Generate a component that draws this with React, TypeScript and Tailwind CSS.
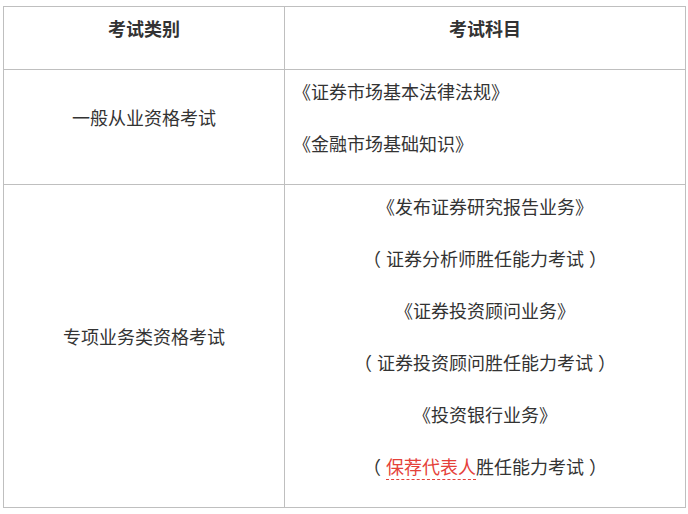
const font = { fontFamily: '"Liberation Sans", "Noto Sans CJK SC", sans-serif' };

const generalSubjects = ['《证券市场基本法律法规》', '《金融市场基础知识》'];

export default function App() {
  return (
    <div className="w-[688px] h-[514px] bg-white pl-[3px] pt-[6px]" style={font}>
      <table className="w-[683px] border-collapse text-[18px] text-[#333]">
        <colgroup>
          <col className="w-[281px]" />
          <col />
        </colgroup>
        <tbody>
          {/* Header */}
          <tr>
            <th className="border border-[#bfbfbf] pt-[10px] pb-0 align-middle font-bold">
              <p className="leading-[26px] mb-[26px]">考试类别</p>
            </th>
            <th className="border border-[#bfbfbf] pt-[10px] pb-0 align-middle font-bold">
              <p className="leading-[26px] mb-[26px]">考试科目</p>
            </th>
          </tr>

          {/* 一般从业 */}
          <tr>
            <td className="border border-[#bfbfbf] pt-[10px] pb-0 align-middle text-center">
              <p className="leading-[26px] mb-[26px]">一般从业资格考试</p>
            </td>
            <td className="border border-[#bfbfbf] pt-[10px] pb-0 pl-[8px] align-middle">
              {generalSubjects.map((s) => (
                <p key={s} className="leading-[26px] mb-[26px]">{s}</p>
              ))}
            </td>
          </tr>

          {/* 专项业务类 */}
          <tr>
            <td className="border border-[#bfbfbf] pt-[10px] pb-0 align-middle text-center">
              <p className="leading-[26px] mb-[26px]">专项业务类资格考试</p>
            </td>
            <td className="border border-[#bfbfbf] pt-[10px] pb-0 align-middle text-center">
              <p className="leading-[26px] mb-[26px]">《发布证券研究报告业务》</p>
              <p className="leading-[26px] mb-[26px]">（ 证券分析师胜任能力考试 ）</p>
              <p className="leading-[26px] mb-[26px]">《证券投资顾问业务》</p>
              <p className="leading-[26px] mb-[26px]">（ 证券投资顾问胜任能力考试 ）</p>
              <p className="leading-[26px] mb-[26px]">《投资银行业务》</p>
              <p className="leading-[26px] mb-[26px]">
                （ <span className="text-[#e5413a] underline decoration-dashed decoration-1 decoration-[#e5413a] underline-offset-[5px]">保荐代表人</span>胜任能力考试 ）
              </p>
            </td>
          </tr>
        </tbody>
      </table>
    </div>
  );
}
